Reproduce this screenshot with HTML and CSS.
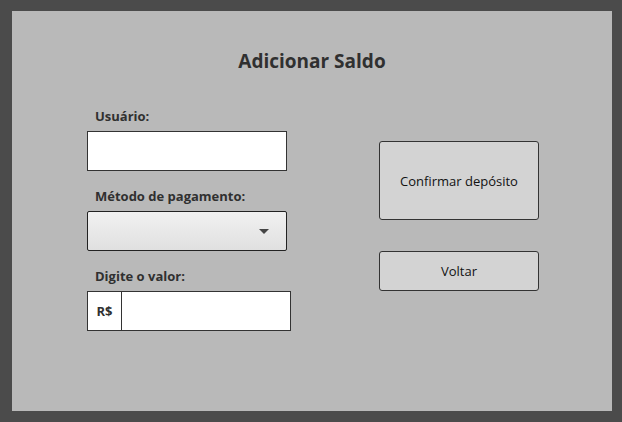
FILE: index.html
```html
<!DOCTYPE html>
<html lang="pt-BR">
<head>
<meta charset="utf-8">
<title>Adicionar Saldo</title>
<link rel="stylesheet" href="styles.css">
</head>
<body>
<div class="panel">
  <h1 class="title">Adicionar Saldo</h1>
  <div class="content">
    <div class="form">
      <div class="group">
        <label class="label">Usuário:</label>
        <div class="input"></div>
      </div>
      <div class="group">
        <label class="label">Método de pagamento:</label>
        <div class="combo"><span class="arrow"></span></div>
      </div>
      <div class="group">
        <label class="label">Digite o valor:</label>
        <div class="money">
          <span class="prefix">R$</span>
          <span class="money-field"></span>
        </div>
      </div>
    </div>
    <div class="actions">
      <button class="btn btn-big">Confirmar depósito</button>
      <button class="btn btn-small">Voltar</button>
    </div>
  </div>
</div>
</body>
</html>
```
FILE: styles.css
```css
html, body {
  margin: 0;
  padding: 0;
}
body {
  background: #4b4b4b;
  width: 622px;
  height: 422px;
  overflow: hidden;
  font-family: "Open Sans", "Noto Sans", "Liberation Sans", sans-serif;
}
.panel {
  margin: 11px 10px 11px 12px;
  width: 600px;
  height: 400px;
  background: #b9b9b9;
  box-sizing: border-box;
  padding-top: 38px;
}
.title {
  margin: 0;
  height: 24px;
  line-height: 24px;
  font-size: 19px;
  font-weight: 700;
  color: #303030;
  text-align: center;
}
.content {
  margin-top: 35px;
  padding-left: 75px;
  display: flex;
  gap: 88px;
}
.form {
  width: 204px;
  display: flex;
  flex-direction: column;
}
.group {
  display: flex;
  flex-direction: column;
  margin-bottom: 17px;
}
.label {
  display: block;
  line-height: 16px;
  height: 16px;
  margin-bottom: 7px;
  padding-left: 8px;
  font-size: 13px;
  font-weight: 700;
  color: #303030;
}
.input {
  width: 200px;
  height: 40px;
  box-sizing: border-box;
  background: #ffffff;
  border: 1px solid #333333;
}
.combo {
  width: 200px;
  height: 40px;
  box-sizing: border-box;
  border: 1px solid #222222;
  border-radius: 2px;
  background: linear-gradient(#f1f1f1, #e0e0e0);
  display: flex;
  align-items: center;
  justify-content: flex-end;
  padding-right: 17px;
}
.arrow {
  width: 0;
  height: 0;
  border-left: 5px solid transparent;
  border-right: 5px solid transparent;
  border-top: 5px solid #444444;
}
.money {
  width: 204px;
  height: 40px;
  box-sizing: border-box;
  border: 1px solid #333333;
  background: #ffffff;
  display: flex;
}
.prefix {
  width: 33px;
  border-right: 1px solid #333333;
  display: flex;
  align-items: center;
  justify-content: center;
  font-size: 13px;
  font-weight: 700;
  color: #303030;
}
.money-field {
  flex: 1;
}
.actions {
  display: flex;
  flex-direction: column;
  padding-top: 33px;
  gap: 31px;
}
.btn {
  width: 160px;
  box-sizing: border-box;
  background: #d3d3d3;
  border: 1px solid #333333;
  border-radius: 3px;
  font-family: inherit;
  font-size: 13px;
  color: #111111;
  padding: 0;
  display: flex;
  align-items: center;
  justify-content: center;
}
.btn-big {
  height: 79px;
}
.btn-small {
  height: 40px;
}
```
